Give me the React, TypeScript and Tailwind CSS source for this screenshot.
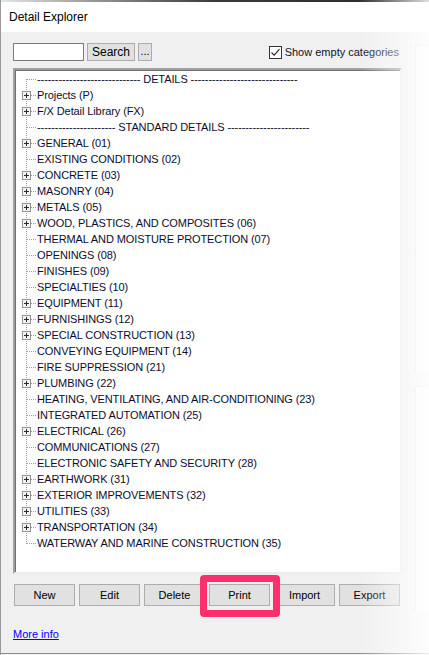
import React from 'react'

type Row = { label: string; plus?: boolean; sep?: boolean }

const rows: Row[] = [
  { label: '----------------------------- DETAILS ------------------------------', sep: true },
  { label: 'Projects (P)', plus: true },
  { label: 'F/X Detail Library (FX)', plus: true },
  { label: '---------------------- STANDARD DETAILS -----------------------', sep: true },
  { label: 'GENERAL (01)', plus: true },
  { label: 'EXISTING CONDITIONS (02)' },
  { label: 'CONCRETE (03)', plus: true },
  { label: 'MASONRY (04)', plus: true },
  { label: 'METALS (05)', plus: true },
  { label: 'WOOD, PLASTICS, AND COMPOSITES (06)', plus: true },
  { label: 'THERMAL AND MOISTURE PROTECTION (07)' },
  { label: 'OPENINGS (08)' },
  { label: 'FINISHES (09)' },
  { label: 'SPECIALTIES (10)' },
  { label: 'EQUIPMENT (11)', plus: true },
  { label: 'FURNISHINGS (12)', plus: true },
  { label: 'SPECIAL CONSTRUCTION (13)', plus: true },
  { label: 'CONVEYING EQUIPMENT (14)' },
  { label: 'FIRE SUPPRESSION (21)' },
  { label: 'PLUMBING (22)', plus: true },
  { label: 'HEATING, VENTILATING, AND AIR-CONDITIONING (23)' },
  { label: 'INTEGRATED AUTOMATION (25)' },
  { label: 'ELECTRICAL (26)', plus: true },
  { label: 'COMMUNICATIONS (27)' },
  { label: 'ELECTRONIC SAFETY AND SECURITY (28)' },
  { label: 'EARTHWORK (31)', plus: true },
  { label: 'EXTERIOR IMPROVEMENTS (32)', plus: true },
  { label: 'UTILITIES (33)', plus: true },
  { label: 'TRANSPORTATION (34)', plus: true },
  { label: 'WATERWAY AND MARINE CONSTRUCTION (35)' },
]

// tree connector lines + expand box, 22x16 per row
function TreeGlyph({ plus, first, last }: { plus?: boolean; first?: boolean; last?: boolean }) {
  return (
    <svg width="22" height="16" className="shrink-0">
      <line
        x1="11.5"
        y1={first ? 8 : 0}
        x2="11.5"
        y2={last ? 9 : 16}
        stroke="#a0a0a0"
        strokeDasharray="1 1"
        shapeRendering="crispEdges"
      />
      <line x1="12" y1="8.5" x2="22" y2="8.5" stroke="#a0a0a0" strokeDasharray="1 1" shapeRendering="crispEdges" />
      {plus && (
        <g shapeRendering="crispEdges">
          <rect x="7.5" y="4.5" width="8" height="8" fill="#f4f4f4" stroke="#919191" />
          <line x1="9" y1="8.5" x2="14" y2="8.5" stroke="#1c2a4a" />
          <line x1="11.5" y1="6" x2="11.5" y2="11" stroke="#1c2a4a" />
        </g>
      )}
    </svg>
  )
}

function WinButton({ children }: { children: React.ReactNode }) {
  return (
    <button className="w-[61px] h-[22px] bg-[#e1e1e1] border border-[#adadad] text-[11px] text-black flex items-center justify-center">
      {children}
    </button>
  )
}

export default function App() {
  return (
    <div
      className="relative w-[429px] h-[655px] overflow-hidden bg-[#f0f0f0] border-l border-[#9a9a9a] flex flex-col"
      style={{ fontFamily: '"Liberation Sans", Arial, sans-serif' }}
    >
      {/* title bar */}
      <div className="h-[32px] shrink-0 bg-white flex flex-col">
        <div className="h-[2px] bg-gradient-to-r from-[#e6e6e6] via-[#3a3a3a] to-[#2a2a2a]" />
        <div className="flex-1 flex items-center pl-[8px] text-[12px] text-black">Detail Explorer</div>
      </div>

      <div className="flex-1 flex">
        {/* main panel */}
        <div className="w-[401px] shrink-0 pl-[12px] flex flex-col">
          <div className="mt-[11px] h-[18px] flex items-center">
            <div className="w-[71px] h-[18px] bg-white border border-[#7a7a7a]" />
            <button className="ml-[3px] w-[48px] h-[18px] bg-[#e1e1e1] border border-[#adadad] text-[12px] text-black flex items-center justify-center">
              Search
            </button>
            <button className="ml-[3px] w-[14px] h-[18px] bg-[#e1e1e1] border border-[#adadad] text-[11px] text-black flex items-end justify-center pb-[3px] leading-none">
              ...
            </button>
            <div className="ml-auto mr-[3px] flex items-center gap-[3px]">
              <div className="w-[13px] h-[13px] bg-white border border-[#333333] flex items-center justify-center">
                <svg width="11" height="11" viewBox="0 0 11 11">
                  <path d="M1.5 5.5 L4.2 8.2 L9.5 2.2" fill="none" stroke="#222" strokeWidth="1.1" />
                </svg>
              </div>
              <span className="text-[11px] text-[#101030]">Show empty categories</span>
            </div>
          </div>

          {/* tree view */}
          <div className="mt-[7px] h-[506px] w-[389px] bg-white border-2 border-t-[#a0a0a0] border-l-[#a0a0a0] border-r-[#ececec] border-b-[#ececec] shadow-[inset_1px_1px_0_#6e6e6e] overflow-hidden">
            <div className="pt-[1px]">
              {rows.map((r, i) => (
                <div key={i} className="h-4 flex items-center">
                  <TreeGlyph plus={r.plus} first={i === 0} last={i === rows.length - 1} />
                  <span className="text-[11px] tracking-[-0.1px] whitespace-nowrap text-[#0c0c2c] leading-4">
                    {r.label}
                  </span>
                </div>
              ))}
            </div>
          </div>

          {/* buttons */}
          <div className="mt-[10px] pl-[1px] flex gap-[4px]">
            <WinButton>New</WinButton>
            <WinButton>Edit</WinButton>
            <WinButton>Delete</WinButton>
            <WinButton>Print</WinButton>
            <WinButton>Import</WinButton>
            <WinButton>Export</WinButton>
          </div>

          <a className="mt-[21px] text-[11px] text-[#0000ff] underline leading-[14px] w-fit">More info</a>
        </div>

        {/* right side panels */}
        <div className="ml-[13px] flex-1 flex flex-col pt-[13px] gap-[13px] pb-[43px]">
          <div className="h-[328px] bg-[#f8f8f8] border-l border-t border-[#dedede]" />
          <div className="flex-1 bg-[#f8f8f8] border-l border-t border-[#dedede]" />
        </div>
      </div>

      <div className="h-[2px] shrink-0 border-t border-[#8c8c8c] bg-[#f4f4f4]" />

      {/* fading right edge */}
      <div className="absolute top-0 right-0 w-[70px] h-full bg-gradient-to-r from-white/0 to-white/85 pointer-events-none" />

      {/* highlight around Print */}
      <div className="absolute left-[199px] top-[575px] w-[80px] h-[42px] border-[7px] border-[#fe2f6c] rounded-[4px] pointer-events-none" />
    </div>
  )
}
